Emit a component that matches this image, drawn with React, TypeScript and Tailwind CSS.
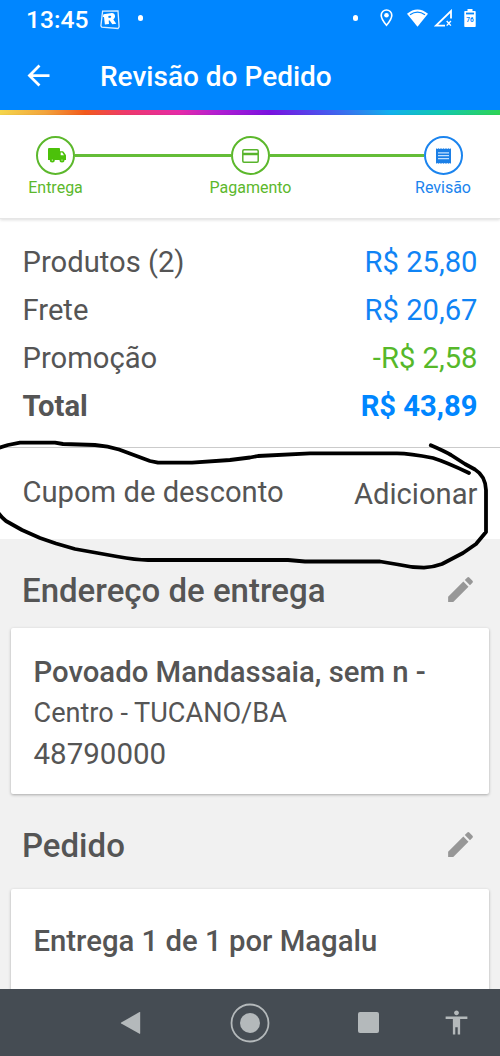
import React from "react";
import {
  MdAccessibility,
  MdArrowBack,
  MdEdit,
} from "react-icons/md";

function StatusBar() {
  return (
    <div className="flex h-10 items-center justify-between pl-[26px] pr-6 text-white">
      <div className="flex h-10 items-center">
        <span className="w-[74px] whitespace-nowrap text-[24.6px] font-medium leading-10">13:45</span>
        <svg className="mb-px h-5 w-5" viewBox="0 0 20 20" fill="none">
          <path d="M2.6 1.2 18 .9l1.1 16-1.1 1.6L1.8 17.2.9 15.8z" stroke="#d8ecff" strokeWidth="1.3" />
          <path
            fillRule="evenodd"
            fill="#fff"
            d="M3.5 4.2 11.8 3c3.3-.2 4.6 4.2 1.500 6.500l3 4.200-4 .5-2.600-3.700-1-.1.3 3.600-4.100.6-.9-7.700-1.300.1zM8.300 6l.3 2 1.900-.3c1.100-.3.9-2-.4-1.900z"
          />
        </svg>
        <span className="mb-1 ml-[17.500px] h-[5.500px] w-[5.500px] rounded-full bg-white" />
      </div>
      <div className="flex h-9 items-center self-start">
        <span className="mr-[22px] h-[5.500px] w-[5.500px] rounded-full bg-white" />
        <svg className="mr-[13.500px] h-[18px] w-[13px]" viewBox="0 0 13 18" fill="none">
          <path d="M6.5 1A5.3 5.3 0 0 0 1.2 6.3c0 3.9 5.3 10 5.3 10s5.3-6.1 5.3-10A5.3 5.3 0 0 0 6.5 1z" stroke="#fff" strokeWidth="1.6" />
          <circle cx="6.5" cy="6.2" r="2.3" fill="#fff" />
        </svg>
        <svg className="mr-[6.500px] h-[18px] w-[21px]" viewBox="0 0 21 18">
          <path d="M0 4.8Q10.500-3.800 21 4.800L10.500 17.800z" fill="#fff" />
          <path d="M3 5.800Q10.500 .600 18 5.800" fill="none" stroke="#0086ff" strokeWidth="1.300" />
        </svg>
        <svg className="mr-[12px] h-[18px] w-[18px]" viewBox="0 0 18 18" fill="none" stroke="#fff">
          <path d="M17 9.500V2L2 16.600h9" strokeWidth="1.800" />
          <path d="m12.700 12 4.200 4.600m0-4.600-4.200 4.600" strokeWidth="1.400" />
        </svg>
        <svg className="h-[18px] w-[12px]" viewBox="0 0 12 18">
          <path d="M3.500 0h5v2H11a.7.7 0 0 1 .7.7v14.600a.7.7 0 0 1-.7.7H1a.7.7 0 0 1-.7-.7V2.700A.7.7 0 0 1 1 2h2.500z" fill="#fff" />
          <path d="M2 4.500h8" stroke="#0086ff" strokeWidth="1.800" />
          <text x="6" y="12.700" textAnchor="middle" fill="#0086ff" fontSize="6.500" fontWeight="700">76</text>
        </svg>
      </div>
    </div>
  );
}

function TruckIcon() {
  return (
    <svg className="ml-[3px] h-[15px] w-[18px]" viewBox="0 0 18 15">
      <path
        fillRule="evenodd"
        fill="#4cc10a"
        d="M1.300 0h9.900c.5 0 .8.300.8.800v2.400h2.700c.4 0 .7.200.9.500l2.100 3c.2.300.300.500.300.800V12h-1.500a2.500 2.500 0 0 1-5 0H6.800a2.500 2.500 0 0 1-5 0H0V1.200C0 .5.500 0 1.300 0zM12.700 4.600v2.600h3.300l-1.800-2.600zM4.300 11.500a.6.6 0 1 0 0 1.200.6.6 0 0 0 0-1.200zm9.700 0a.6.6 0 1 0 0 1.200.6.6 0 0 0 0-1.200z"
      />
    </svg>
  );
}

function CardIcon() {
  return (
    <svg className="h-[14px] w-[17px]" viewBox="0 0 17 14" fill="none" stroke="#58b42c">
      <rect x=".8" y=".8" width="15.400" height="12.400" rx="1.200" strokeWidth="1.500" />
      <path d="M1 5h15" strokeWidth="2.500" />
    </svg>
  );
}

function ReceiptIcon() {
  return (
    <svg className="h-4 w-[15px]" viewBox="0 0 15 16">
      <path d="M0 .3l1.250.8L2.500.3l1.250.8L5 .3l1.250.8L7.500.3l1.250.8L10 .3l1.250.8L12.500.3l1.250.8L15 .3v15.400l-1.250-.8-1.250.8-1.250-.8-1.250.8-1.250-.8-1.250.8-1.250-.8-1.250.8-1.250-.8-1.250.8-1.250-.8-1.250.8z" fill="#1b7fe6" />
      <path d="M2 4.800h11M2 7.700h11M2 10.700h11" stroke="#c4e2ff" strokeWidth="1.200" />
    </svg>
  );
}

function Step({ label, color, children }: { label: string; color: string; children: React.ReactNode }) {
  return (
    <div className={`flex w-[39px] shrink-0 flex-col items-center ${color}`}>
      <div className="flex h-[39px] w-[39px] items-center justify-center rounded-full border-2 border-current">{children}</div>
      <span className="mt-[3px] whitespace-nowrap text-[16px] leading-5">{label}</span>
    </div>
  );
}

function Stepper() {
  return (
    <div className="flex h-[104px] items-start border-b border-[#e6e6e6] bg-white pl-[36px] pr-[37.500px] pt-[21px] shadow-[0_1px_3px_rgba(0,0,0,0.14)]">
      <Step label="Entrega" color="text-[#5cb82c]">
        <TruckIcon />
      </Step>
      <div className="mt-[18px] h-[3px] w-[156px] bg-[#64bd38]" />
      <Step label="Pagamento" color="text-[#5cb82c]">
        <CardIcon />
      </Step>
      <div className="mt-[18px] h-[3px] flex-1 bg-[#64bd38]" />
      <Step label="Revisão" color="text-[#1b84ee]">
        <ReceiptIcon />
      </Step>
    </div>
  );
}

const rows = [
  { label: "Produtos (2)", value: "R$ 25,80", color: "text-[#0f84f5]", weight: "font-normal" },
  { label: "Frete", value: "R$ 20,67", color: "text-[#0f84f5]", weight: "font-normal" },
  { label: "Promoção", value: "-R$ 2,58", color: "text-[#56b82a]", weight: "font-normal" },
  { label: "Total", value: "R$ 43,89", color: "text-[#0086ff]", weight: "font-bold" },
];

function Summary() {
  return (
    <div className="relative z-0 h-[229px] border-b border-[#cbcbcb] px-[22.500px] pt-[19px]">
      {rows.map((r) => (
        <div key={r.label} className={`flex h-12 items-center justify-between text-[29.200px] leading-[48px] ${r.weight}`}>
          <span>{r.label}</span>
          <span className={r.color}>{r.value}</span>
        </div>
      ))}
    </div>
  );
}

function SectionTitle({ title }: { title: string }) {
  return (
    <div className="flex h-12 items-center justify-between pl-[22px] pr-[23px]">
      <h2 className="pt-[2px] text-[33px] font-medium leading-[48px]">{title}</h2>
      <MdEdit className="mb-[2px] h-[33px] w-[33px] text-[#979797]" />
    </div>
  );
}

function NavBar() {
  return (
    <div className="flex h-[67px] items-center bg-[#454c53] pl-[120px] text-[#b4b9bb]">
      <svg className="h-6 w-[21px]" viewBox="0 0 21 24" fill="currentColor">
        <path d="M19.500 1.100c.4-.2.700 0 .700.400v20.800c0 .500-.3.700-.7.500L1.200 12.500c-.5-.3-.5-.7 0-1z" />
      </svg>
      <svg className="ml-[89px] h-10 w-10" viewBox="0 0 40 40">
        <circle cx="20" cy="20" r="18.500" fill="none" stroke="currentColor" strokeWidth="1.800" />
        <circle cx="20" cy="20" r="10" fill="currentColor" />
      </svg>
      <div className="ml-[87.500px] h-[21px] w-[21px] rounded-[2px] bg-current" />
      <MdAccessibility className="ml-[63.500px] h-[29px] w-[29px]" />
    </div>
  );
}

function HandDrawnLoop() {
  return (
    <svg className="pointer-events-none absolute left-0 top-[430px] h-[150px] w-[500px]" viewBox="0 430 500 150" fill="none" stroke="#000" strokeWidth="3.800" strokeLinecap="round" strokeLinejoin="round">
      <path d="M-3 448.500 8 445 20 442.700H55L63 444 95 445Q108 446 119 449.500L150 461 158 462.700H192L230 460 250 457.500 258 456 310 453.300H397Q410 453.300 433 458 446 462 469 473" />
      <path d="M430.800 445.300Q444 451 451 455L465 464 475 469.500Q485.500 476 486 490V532L476 544 463 553 442 564Q433 567.300 424 567.600 411 567.600 398 564.500L380 561.500H305L288 560H148Q136 560 117 556.500L75 549 56 543.500 40 538 22 530 6 521Q0 516-3 511" />
    </svg>
  );
}

export default function App() {
  return (
    <div className="relative flex h-[1056px] w-[500px] flex-col overflow-hidden bg-white font-['Roboto',sans-serif] text-[#555]">
      <header className="shrink-0 bg-[#0086ff]">
        <StatusBar />
        <div className="flex h-[70px] items-center pl-[22px] text-white">
          <MdArrowBack className="h-[33px] w-[33px]" />
          <h1 className="ml-[45px] mt-[4px] text-[28px] font-medium leading-10">Revisão do Pedido</h1>
        </div>
        <div className="h-[5px] bg-[linear-gradient(90deg,#f5d64c_0%,#f2a43c_9%,#f25a1c_17%,#ee3a6a_25%,#e52ba8_36%,#b51fd0_43%,#7a12e0_54%,#4a55ee_65%,#12b0ee_78%,#12c8b0_88%,#2fd455_100%)]" />
      </header>
      <Stepper />
      <Summary />
      <div className="flex h-[91px] shrink-0 items-start justify-between bg-white px-[22.500px] pt-5 text-[29.200px] leading-[48px]">
        <span>Cupom de desconto</span>
        <span className="mt-[2px]">Adicionar</span>
      </div>
      <main className="flex h-[450px] shrink-0 flex-col overflow-hidden bg-[#f1f1f1] pt-[27px]">
        <SectionTitle title="Endereço de entrega" />
        <div className="mx-[11px] mt-[14px] h-[166px] shrink-0 rounded-[2px] bg-white px-[22.500px] pt-[24px] leading-[41px] shadow-[0_1px_3px_rgba(0,0,0,0.3)]">
          <p className="text-[29.300px] font-medium">Povoado Mandassaia, sem n -</p>
          <p className="text-[27.100px]">Centro - TUCANO/BA</p>
          <p className="text-[29.500px]">48790000</p>
        </div>
        <div className="mt-[27px] shrink-0">
          <SectionTitle title="Pedido" />
        </div>
        <div className="mx-[11px] mt-[20px] h-[120px] shrink-0 rounded-[2px] bg-white px-[22.500px] pt-[32px] shadow-[0_1px_3px_rgba(0,0,0,0.3)]">
          <p className="text-[29.300px] font-medium leading-[41px]">Entrega 1 de 1 por Magalu</p>
        </div>
      </main>
      <NavBar />
      <HandDrawnLoop />
    </div>
  );
}
